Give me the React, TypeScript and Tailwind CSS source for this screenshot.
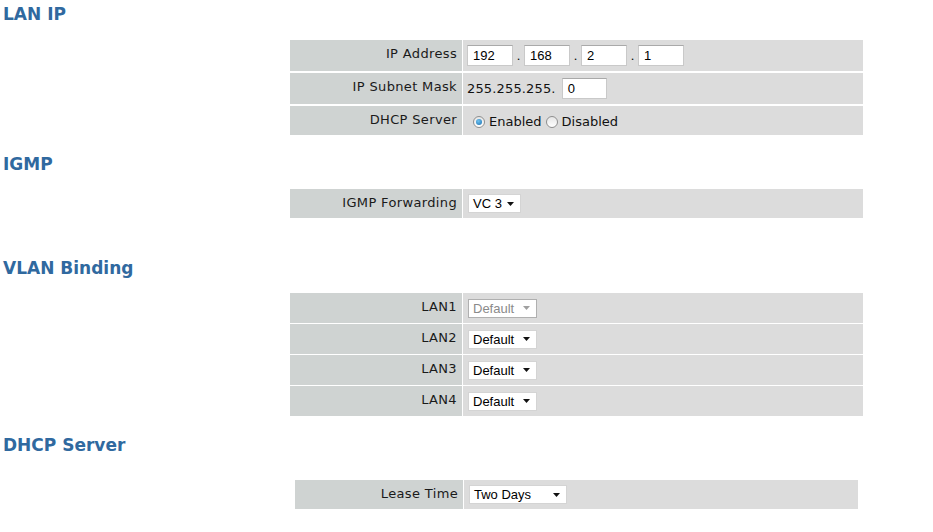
import React from "react";

const V = { fontFamily: '"DejaVu Sans", Verdana, sans-serif' };
const A = { fontFamily: '"Liberation Sans", Arial, sans-serif' };

function Heading({ children, className = "" }: { children: React.ReactNode; className?: string }) {
  return (
    <div
      className={`pl-[3px] text-[17px] leading-[18px] font-bold text-[#30699f] ${className}`}
      style={V}
    >
      {children}
    </div>
  );
}

function Row({
  label,
  children,
  h = "h-[31px]",
  labelW = "w-[172px]",
}: {
  label: string;
  children: React.ReactNode;
  h?: string;
  labelW?: string;
}) {
  return (
    <div className={`flex ${h} gap-px`}>
      <div
        className={`${labelW} shrink-0 bg-[#cfd3d2] text-right pr-[5px] pt-[6px] text-[13px] leading-[15px] tracking-[0.35px] text-[#1a1a1a]`}
        style={V}
      >
        {label}
      </div>
      <div className="flex-1 bg-[#dcdcdc] flex items-center pl-[4px]">{children}</div>
    </div>
  );
}

function TextBox({ value, w = "w-[46px]" }: { value: string; w?: string }) {
  return (
    <div
      className={`${w} h-[21px] bg-white border border-[#c9c9c9] border-t-[#a9a9a9] flex items-center pl-[5px] text-[13px] text-black`}
      style={A}
    >
      {value}
    </div>
  );
}

function Select({ value, w, disabled = false }: { value: string; w: string; disabled?: boolean }) {
  return (
    <div
      className={`${w} ml-px h-[19px] bg-white border ${
        disabled ? "border-[#b0b0b0] text-[#8a8a8a]" : "border-[#d4d4d4] text-black"
      } flex items-center justify-between pl-[4px] pr-[6px] text-[13px] leading-[15px]`}
      style={A}
    >
      <span>{value}</span>
      <svg width="7" height="4" viewBox="0 0 7 4">
        <path d="M0 0 H7 L3.5 4 Z" fill={disabled ? "#a0a0a0" : "#111"} />
      </svg>
    </div>
  );
}

function Radio({ checked }: { checked: boolean }) {
  return (
    <span className="inline-flex w-[12px] h-[12px] rounded-full border border-[#8f8f8f] bg-gradient-to-b from-[#e6e6e6] to-white items-center justify-center">
      {checked && (
        <span className="w-[6px] h-[6px] rounded-full bg-[radial-gradient(circle_at_40%_35%,#6fc2f0,#1b6fb0)]" />
      )}
    </span>
  );
}

function Dot() {
  return (
    <span className="w-[11px] text-center text-[13px] text-black" style={A}>
      .
    </span>
  );
}

export default function App() {
  return (
    <div className="w-[933px] h-[532px] bg-white overflow-hidden">
      <Heading className="pt-[5px]">LAN IP</Heading>
      <div className="ml-[290px] w-[573px] mt-[17px] flex flex-col gap-[2px]">
        <Row label="IP Address">
          <div className="flex items-center">
            <TextBox value="192" />
            <Dot />
            <TextBox value="168" />
            <Dot />
            <TextBox value="2" />
            <Dot />
            <TextBox value="1" />
          </div>
        </Row>
        <Row label="IP Subnet Mask">
          <div className="flex items-center">
            <span className="text-[13px] text-[#111] mr-[6px] tracking-[0.15px]" style={V}>
              255.255.255.
            </span>
            <TextBox value="0" w="w-[45px]" />
          </div>
        </Row>
        <Row label="DHCP Server" h="h-[29px]">
          <div className="flex items-center pl-[6px] pt-[2px] text-[13px] text-[#111]" style={V}>
            <Radio checked />
            <span className="ml-[4px] mr-[4px]">Enabled</span>
            <Radio checked={false} />
            <span className="ml-[4px]">Disabled</span>
          </div>
        </Row>
      </div>

      <Heading className="mt-[20px]">IGMP</Heading>
      <div className="ml-[290px] w-[573px] mt-[16px] flex flex-col">
        <Row label="IGMP Forwarding" h="h-[29px]">
          <Select value="VC 3" w="w-[53px]" />
        </Row>
      </div>

      <Heading className="mt-[41px]">VLAN Binding</Heading>
      <div className="ml-[290px] w-[573px] mt-[16px] flex flex-col gap-px">
        <Row label="LAN1" h="h-[30px]">
          <Select value="Default" w="w-[69px]" disabled />
        </Row>
        <Row label="LAN2" h="h-[30px]">
          <Select value="Default" w="w-[69px]" />
        </Row>
        <Row label="LAN3" h="h-[30px]">
          <Select value="Default" w="w-[69px]" />
        </Row>
        <Row label="LAN4" h="h-[30px]">
          <Select value="Default" w="w-[69px]" />
        </Row>
      </div>

      <Heading className="mt-[20px]">DHCP Server</Heading>
      <div className="ml-[295px] w-[563px] mt-[26px] flex flex-col">
        <Row label="Lease Time" h="h-[29px]" labelW="w-[168px]">
          <Select value="Two Days" w="w-[98px]" />
        </Row>
      </div>
    </div>
  );
}
